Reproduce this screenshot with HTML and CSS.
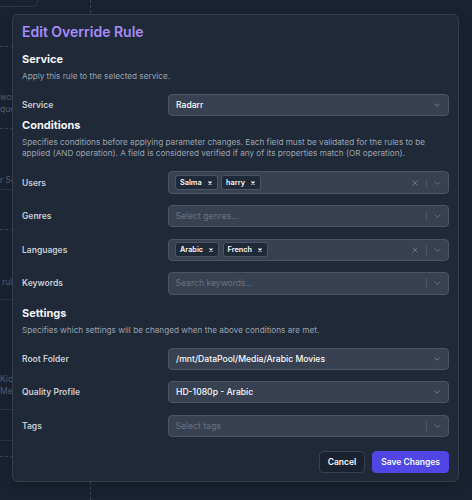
FILE: index.html
```html
<!DOCTYPE html>
<html lang="en">
    <head>
        <meta charset="UTF-8" />
        <meta name="viewport" content="width=device-width, initial-scale=1.0" />
        <title>Edit Override Rule</title>
        <link rel="stylesheet" href="styles.css">
    </head>
    <body>
        <!-- page behind the dialog -->
        <div class="backdrop">
            <div class="lane">
                <div class="lane-head"></div>
                <div class="lane-cell cell-1 dashed"></div>
                <div class="lane-cell cell-2 dashed">
                    <span class="lane-text">wo</span>
                    <span class="lane-text">que</span>
                </div>
                <div class="lane-cell cell-3 solid">
                    <span class="lane-text">r Se</span>
                </div>
                <div class="lane-cell cell-4 dashed"></div>
                <div class="lane-cell cell-5 solid">
                    <span class="lane-text indent">rul</span>
                </div>
                <div class="lane-cell cell-6 solid">
                    <span class="lane-text">Kid</span>
                    <span class="lane-text">Me</span>
                </div>
                <div class="lane-cell cell-7 solid"></div>
                <div class="lane-cell cell-8 dashed"></div>
            </div>
        </div>

        <div class="modal">
            <h2 class="modal-title">Edit Override Rule</h2>

            <section class="rule-section">
                <h3 class="section-title">Service</h3>
                <p class="section-desc">Apply this rule to the selected service.</p>
                <div class="field-list">
                    <div class="field-row">
                        <label class="field-label">Service</label>
                        <div class="select">
                            <span class="select-value">Radarr</span>
                            <svg class="chevron" width="6" height="4" viewBox="0 0 6 4"><path d="M0.5 0.7L3 3.2L5.5 0.7" /></svg>
                        </div>
                    </div>
                </div>
            </section>

            <section class="rule-section">
                <h3 class="section-title">Conditions</h3>
                <p class="section-desc">Specifies conditions before applying parameter changes. Each field must be validated for the rules to be applied (AND operation). A field is considered verified if any of its properties match (OR operation).</p>
                <div class="field-list">
                    <div class="field-row">
                        <label class="field-label">Users</label>
                        <div class="select multi">
                            <div class="chips">
                                <span class="chip">Salma <svg width="4" height="4" viewBox="0 0 4 4"><path d="M0.5 0.5L3.5 3.5M3.5 0.5L0.5 3.5" /></svg></span>
                                <span class="chip">harry <svg width="4" height="4" viewBox="0 0 4 4"><path d="M0.5 0.5L3.5 3.5M3.5 0.5L0.5 3.5" /></svg></span>
                            </div>
                            <div class="select-actions">
                                <svg class="clear" width="6" height="6" viewBox="0 0 6 6"><path d="M0.5 0.5L5.5 5.5M5.5 0.5L0.5 5.5" /></svg>
                                <span class="divider"></span>
                                <svg class="chevron" width="7" height="4" viewBox="0 0 7 4"><path d="M0.5 0.5L3.5 3.5L6.5 0.5" /></svg>
                            </div>
                        </div>
                    </div>
                    <div class="field-row">
                        <label class="field-label">Genres</label>
                        <div class="select multi">
                            <span class="placeholder">Select genres...</span>
                            <div class="select-actions">
                                <span class="divider"></span>
                                <svg class="chevron" width="7" height="4" viewBox="0 0 7 4"><path d="M0.5 0.5L3.5 3.5L6.5 0.5" /></svg>
                            </div>
                        </div>
                    </div>
                    <div class="field-row">
                        <label class="field-label">Languages</label>
                        <div class="select multi">
                            <div class="chips">
                                <span class="chip">Arabic <svg width="4" height="4" viewBox="0 0 4 4"><path d="M0.5 0.5L3.5 3.5M3.5 0.5L0.5 3.5" /></svg></span>
                                <span class="chip">French <svg width="4" height="4" viewBox="0 0 4 4"><path d="M0.5 0.5L3.5 3.5M3.5 0.5L0.5 3.5" /></svg></span>
                            </div>
                            <div class="select-actions">
                                <svg class="clear" width="6" height="6" viewBox="0 0 6 6"><path d="M0.5 0.5L5.5 5.5M5.5 0.5L0.5 5.5" /></svg>
                                <span class="divider"></span>
                                <svg class="chevron" width="7" height="4" viewBox="0 0 7 4"><path d="M0.5 0.5L3.5 3.5L6.5 0.5" /></svg>
                            </div>
                        </div>
                    </div>
                    <div class="field-row">
                        <label class="field-label">Keywords</label>
                        <div class="select multi">
                            <span class="placeholder">Search keywords...</span>
                            <div class="select-actions">
                                <span class="divider"></span>
                                <svg class="chevron" width="7" height="4" viewBox="0 0 7 4"><path d="M0.5 0.5L3.5 3.5L6.5 0.5" /></svg>
                            </div>
                        </div>
                    </div>
                </div>
            </section>

            <section class="rule-section section-settings">
                <h3 class="section-title">Settings</h3>
                <p class="section-desc">Specifies which settings will be changed when the above conditions are met.</p>
                <div class="field-list">
                    <div class="field-row">
                        <label class="field-label">Root Folder</label>
                        <div class="select">
                            <span class="select-value">/mnt/DataPool/Media/Arabic Movies</span>
                            <svg class="chevron" width="6" height="4" viewBox="0 0 6 4"><path d="M0.5 0.7L3 3.2L5.5 0.7" /></svg>
                        </div>
                    </div>
                    <div class="field-row">
                        <label class="field-label">Quality Profile</label>
                        <div class="select">
                            <span class="select-value">HD-1080p - Arabic</span>
                            <svg class="chevron" width="6" height="4" viewBox="0 0 6 4"><path d="M0.5 0.7L3 3.2L5.5 0.7" /></svg>
                        </div>
                    </div>
                    <div class="field-row">
                        <label class="field-label">Tags</label>
                        <div class="select multi">
                            <span class="placeholder">Select tags</span>
                            <div class="select-actions">
                                <span class="divider"></span>
                                <svg class="chevron" width="7" height="4" viewBox="0 0 7 4"><path d="M0.5 0.5L3.5 3.5L6.5 0.5" /></svg>
                            </div>
                        </div>
                    </div>
                </div>
            </section>

            <div class="modal-actions">
                <button type="button" class="btn btn-cancel">Cancel</button>
                <button type="submit" class="btn btn-save">Save Changes</button>
            </div>
        </div>
    </body>
</html>
```

FILE: styles.css
```css
* {
    box-sizing: border-box;
}
body {
    margin: 0;
    width: 472px;
    height: 500px;
    overflow: hidden;
    position: relative;
    font-family: Inter, "Noto Sans", sans-serif;
    background-color: #1a2231;
}

/* page behind the dialog */
.backdrop {
    display: flex;
    height: 100%;
}
.lane {
    display: flex;
    flex-direction: column;
    width: 91px;
    height: 100%;
    border-right: 1px dashed #3c4555;
}
.lane-head {
    width: 38px;
    height: 7px;
    flex-shrink: 0;
    border-right: 1px solid #2f3848;
    border-bottom: 1px solid #2f3848;
    border-bottom-right-radius: 5px;
}
.lane-cell {
    flex-shrink: 0;
    display: flex;
    flex-direction: column;
    white-space: nowrap;
}
.lane-cell.dashed {
    border-bottom: 1px dashed #3c4555;
}
.lane-cell.solid {
    border-bottom: 1px solid #2a3343;
}
.cell-1 { height: 40px; }
.cell-2 { height: 82px; padding-top: 44px; }
.cell-3 { height: 61px; padding-top: 45px; }
.cell-4 { height: 40px; }
.cell-5 { height: 70px; padding-top: 46px; }
.cell-6 { height: 110px; padding-top: 73px; }
.cell-7 { height: 31px; }
.cell-8 { height: 16px; }
.lane-text {
    width: 12px;
    overflow: hidden;
    font-size: 8.5px;
    line-height: 12px;
    color: #555e6e;
}
.lane-text.indent {
    padding-left: 2px;
}

/* dialog */
.modal {
    position: absolute;
    top: 14px;
    left: 12px;
    width: 447px;
    padding: 7px 9px 8px;
    background-color: #1f2937;
    border: 1px solid #343e4e;
    border-radius: 6px;
    box-shadow: 0 4px 12px rgba(0, 0, 0, 0.2);
}
.modal-title {
    margin: 0 0 9px;
    font-size: 14px;
    line-height: 20px;
    font-weight: 600;
    color: #a78bfa;
}
.rule-section {
    margin-top: 1px;
}
.section-settings {
    margin-top: 10px;
}
.section-title {
    margin: 0;
    font-size: 11px;
    line-height: 16px;
    font-weight: 700;
    color: #f3f4f6;
}
.section-desc {
    margin: 4px 0 0;
    font-size: 8.2px;
    line-height: 11px;
    color: #9ca3af;
}
.field-list {
    display: flex;
    flex-direction: column;
    gap: 11.2px;
    margin-top: 12px;
}
.field-row {
    display: grid;
    grid-template-columns: 146px 1fr;
    align-items: center;
}
.field-label {
    font-size: 8.5px;
    font-weight: 600;
    color: #c9ced6;
}

/* select boxes */
.select {
    display: flex;
    align-items: center;
    height: 22.4px;
    padding: 0 8px 0 7px;
    background-color: #374151;
    border: 1px solid #4b5563;
    border-radius: 4px;
}
.select-value {
    flex: 1;
    font-size: 8.6px;
    font-weight: 500;
    color: #f9fafb;
}
.select .chevron path {
    fill: none;
    stroke: #7d8594;
    stroke-width: 0.9;
}
.select.multi {
    padding: 0 7px 0 6px;
}
.placeholder {
    flex: 1;
    padding-left: 0.5px;
    font-size: 8.6px;
    color: #6b7280;
}
.chips {
    flex: 1;
    display: flex;
    gap: 3.5px;
}
.chip {
    display: inline-flex;
    align-items: center;
    gap: 6px;
    height: 15px;
    padding: 0 5px 0 4px;
    background-color: #1f2937;
    border: 1px solid #4b5563;
    border-radius: 3px;
    font-size: 7.3px;
    font-weight: 600;
    color: #f9fafb;
}
.chip path {
    fill: none;
    stroke: #f9fafb;
    stroke-width: 1.1;
}
.select-actions {
    display: flex;
    align-items: center;
    gap: 7.5px;
}
.select-actions .clear path {
    fill: none;
    stroke: #6b7280;
    stroke-width: 1;
}
.select-actions .chevron path {
    stroke: #6b7280;
}
.divider {
    width: 1px;
    height: 10px;
    background-color: #4b5563;
}

/* footer buttons */
.modal-actions {
    display: flex;
    justify-content: flex-end;
    gap: 7px;
    margin-top: 14px;
}
.btn {
    height: 22px;
    padding: 0 8px;
    border-radius: 4px;
    font-family: inherit;
    font-size: 8.5px;
    font-weight: 600;
    color: #f9fafb;
    cursor: pointer;
}
.btn-cancel {
    background-color: #1a2230;
    border: 1px solid #374151;
}
.btn-save {
    background-color: #4f46e5;
    border: 1px solid #4f46e5;
}
.btn-save:hover {
    background-color: #4338ca;
}
```
